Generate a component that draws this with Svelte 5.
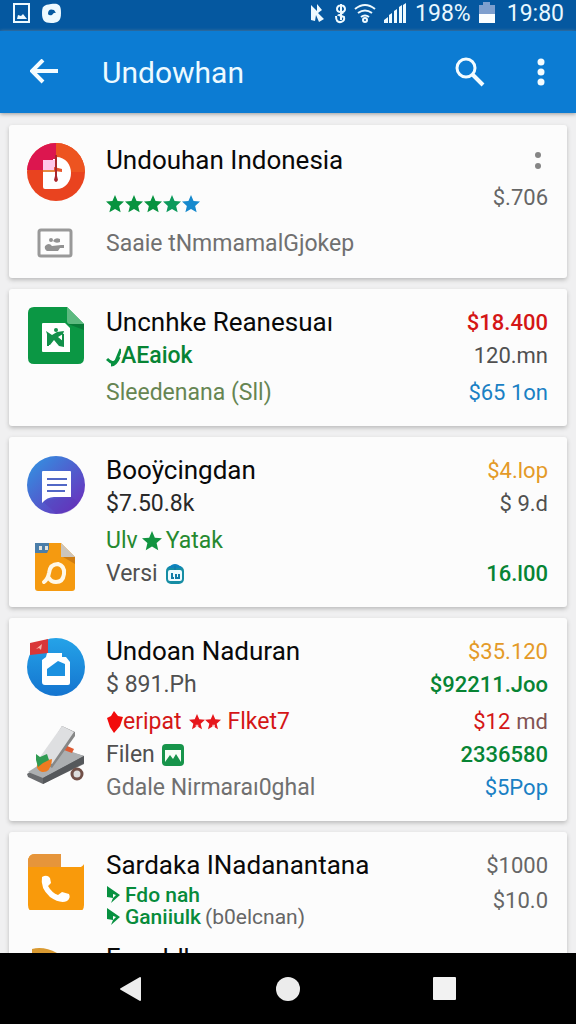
<script>
  const star = 'M12 0l3.400 8 8.600.8-6.500 5.700 2 8.500L12 18.500 4.500 23l2-8.500L0 8.800 8.600 8z'

  const apps = [
    {
      icons: ['disc', 'picture'],
      roomy: true,
      rows: [
        { title: 'Undouhan Indonesia', menu: true },
        { stars: ['#07933f', '#07933f', '#07933f', '#0c9a5c', '#1689cd'], price: '$.706', tone: 'grey' },
        { parts: [{ text: 'Saaie tNmmamalGjokep', tone: 'soft' }] },
      ],
    },
    {
      icons: ['sheet'],
      rows: [
        { title: 'Uncnhke Reanesuaı', price: '$18.400', tone: 'red', strong: true },
        { parts: [{ shape: 'swoosh' }, { text: 'AEaiok', tone: 'green', strong: true }], price: '120.mn', tone: 'dark' },
        { parts: [{ text: 'Sleedenana (Sll)', tone: 'olive' }], price: '$65 1on', tone: 'blue', space: true },
      ],
    },
    {
      icons: ['chat', 'doc'],
      rows: [
        { title: 'Booÿcingdan', price: '$4.lop', tone: 'amber' },
        { parts: [{ text: '$7.50.8k', tone: 'ink' }], price: '$ 9.d', tone: 'dark' },
        { parts: [{ text: 'Ulv', tone: 'leaf' }, { shape: 'star' }, { text: 'Yatak', tone: 'leaf' }], space: true },
        { parts: [{ text: 'Versi', tone: 'dark' }, { shape: 'bag' }], price: '16.l00', tone: 'green', strong: true },
      ],
    },
    {
      icons: ['home', 'stapler'],
      rows: [
        { title: 'Undoan Naduran', price: '$35.120', tone: 'amber' },
        { parts: [{ text: '$ 891.Ph', tone: 'dark' }], price: '$92211.Joo', tone: 'green', strong: true },
        { parts: [{ shape: 'redpin' }, { text: 'eripat', tone: 'red' }, { shape: 'redstars' }, { text: 'Flket7', tone: 'red' }], price: '$12', unit: 'md', tone: 'red', space: true },
        { parts: [{ text: 'Filen', tone: 'dark' }, { shape: 'photo' }], price: '2336580', tone: 'green', strong: true },
        { parts: [{ text: 'Gdale Nirmaraı0ghal', tone: 'soft' }], price: '$5Pop', tone: 'blue' },
      ],
    },
    {
      icons: ['phone', 'folder'],
      rows: [
        { title: 'Sardaka INadanantana', price: '$1000', tone: 'grey' },
        { lines: [{ label: 'Fdo nah' }, { label: 'Ganiiulk', note: '(b0elcnan)' }], price: '$10.0', tone: 'grey' },
        { title: 'Fanaldka', next: true },
      ],
    },
  ]
</script>

{#snippet appIcon(name)}
  {#if name === 'disc'}
    <svg width="58" height="60" viewBox="0 0 58 60">
      <circle cx="29" cy="29" r="29" fill="#e9431f" />
      <path d="M29 0v27H0A29 29 0 0 1 29 0z" fill="#dc164f" />
      <path d="M29 0a29 29 0 0 1 29 29H29z" fill="#ed5420" />
      <path d="M29 14c20 0 20 32 0 32H18q-2 0-2-2V16h13z" fill="#fff" />
      <path d="M16 16h13v-2h-3v3H16z" fill="#dc164f" />
      <path d="M16 17h13v10H16z" fill="#ffc6e9" />
      <path d="M16 27h13v2H16z" fill="#e58a43" />
      <path d="M27 24l8 2v3l-8-1z" fill="#e9562a" />
      <path d="M28 12h2v21l1 4q-2 4-4 0l1-4z" fill="#a9262c" />
    </svg>
  {:else if name === 'picture'}
    <svg width="58" height="56" viewBox="0 0 58 56">
      <rect x="12" y="15" width="32" height="26" rx="2" fill="#fdfdfd" stroke="#999" stroke-width="3" />
      <path d="M18 31q4-4 7 0l9-1h3v3h-4l-2 3H20q-3-2-2-5z" fill="#929292" />
      <circle cx="24" cy="25" r="2" fill="#929292" />
      <path d="M26 26q2-4 7-2v3q-4 2-7-1z" fill="#929292" />
    </svg>
  {:else if name === 'sheet'}
    <svg width="58" height="60" viewBox="0 0 58 60">
      <path d="M7 0h33l17 17v34q0 6-6 6H7q-6 0-6-6V6q0-6 6-6z" fill="#0b9744" />
      <path d="M40 0l17 17H43q-3 0-3-3z" fill="#5dba80" />
      <path d="M41 17h16v6z" fill="#087b38" />
      <path d="M16 16h22l5 5v24H16q-1 0-1-1V17q0-1 1-1z" fill="#fff" />
      <path d="M19 24l6 4 5-3 7-1-1 3-5 3 6 5v5l-5-1-5-6-4 5h-3l1-8z" fill="#12904a" />
      <path d="M21 27v12M36 27v10" stroke="#12904a" stroke-width="2" />
      <circle cx="29" cy="23" r="2" fill="#12904a" />
    </svg>
  {:else if name === 'chat'}
    <svg width="58" height="60" viewBox="0 0 58 60">
      <defs>
        <linearGradient id="violet" x1="0" y1="0" x2="1" y2="1">
          <stop offset=".1" stop-color="#358ddf" />
          <stop offset=".9" stop-color="#6932be" />
        </linearGradient>
      </defs>
      <circle cx="29" cy="30" r="29" fill="url(#violet)" />
      <path d="M44 41l8 7q-10 12-22 11L15 46z" fill="#5a35b2" opacity=".3" />
      <path d="M16 16h27q1 0 1 1v25H27q-7 0-12 6V17q0-1 1-1z" fill="#fff" />
      <path d="M20 24h20M20 30h20M20 36h18" stroke="#5268c6" stroke-width="2" />
    </svg>
  {:else if name === 'doc'}
    <svg width="58" height="80" viewBox="0 0 58 80">
      <path d="M8 16h26l14 14v31q0 3-3 3H11q-3 0-3-3z" fill="#f59a10" />
      <path d="M34 16l14 14H34z" fill="#ccc5bc" />
      <path d="M36 30h12v7z" fill="#cf7d12" />
      <path d="M8 16h14v6l-2 4H8z" fill="#4b7ea9" />
      <path d="M12 19h3v4h-3zM18 19h3v4h-3z" fill="#e4e4df" />
      <path d="M17 55q4-3 5-9 1-9 9-9 7 2 6 10-1 8-8 8-5 0-7-4" fill="none" stroke="#fff8e8" stroke-width="4" stroke-linejoin="round" stroke-linecap="round" />
    </svg>
  {:else if name === 'home'}
    <svg width="58" height="60" viewBox="0 0 58 60">
      <defs>
        <linearGradient id="sky" x1="0" y1="0" x2="0" y2="1">
          <stop offset="0" stop-color="#25a3e8" />
          <stop offset="1" stop-color="#1474cf" />
        </linearGradient>
      </defs>
      <circle cx="29" cy="31" r="29" fill="url(#sky)" />
      <path d="M20 17h15v4h4l4 5v21q0 2-2 2H18q-3 0-3-3V24l4-3z" fill="#fff" />
      <path d="M20 33l11-8 7 3v12H20z" fill="#1b91e0" />
      <path d="M3 7l18-4v14L3 19z" fill="#d93738" />
      <path d="M9 13l6-5-1 6-2-2z" fill="#f6b4aa" />
    </svg>
  {:else if name === 'stapler'}
    <svg width="58" height="100" viewBox="0 0 58 100">
      <path d="M0 66l36-24 21 6v8L16 76 1 69z" fill="#696b6e" />
      <path d="M1 64l36-23 20 7-41 22z" fill="#acafb1" />
      <path d="M16 70l41-22v7L16 76z" fill="#55585b" />
      <path d="M38 37l9 4-2 4-8-3z" fill="#df5b32" />
      <path d="M35 18l13 6v4L25 60l-11-7z" fill="#868787" />
      <path d="M35 18l12 6-22 32-12-7z" fill="#dedfe1" />
      <path d="M10 57q4-8 7-4l8-2q-1 14-10 13-6-2-5-7z" fill="#ed7b20" />
      <path d="M9 46l4 3 7-3 2 6-6 3-5 4-2-7z" fill="#2f9b52" />
      <circle cx="50" cy="66" r="5" fill="#ddd" stroke="#715048" stroke-width="3" />
    </svg>
  {:else if name === 'phone'}
    <svg width="58" height="60" viewBox="0 0 58 60">
      <path d="M8 4h26v13h20q3-2 3-3v41q0 7-7 7H8q-7 0-7-7V12q0-8 7-8z" fill="#f99a0b" />
      <path d="M8 4h26v13H1v-5q0-8 7-8z" fill="#e6953b" />
      <path d="M15 27q5-3 8 1l1 5-3 3q4 7 10 9l4-3 7 2q2 4-2 7-7 3-17-4Q13 38 15 27z" fill="#fff" />
    </svg>
  {:else}
    <svg width="58" height="58" viewBox="0 0 58 58">
      <path d="M5 27q12-3 25 4h20v26H5z" fill="#d99a32" />
    </svg>
  {/if}
{/snippet}

{#snippet shape(name)}
  {#if name === 'swoosh'}
    <svg class="inline tight" width="15" height="22" viewBox="0 0 15 22">
      <path d="M1 14q6 6 9 2l5-12M5 20q5 0 8-8" fill="none" stroke="#079140" stroke-width="3" />
    </svg>
  {:else if name === 'star'}
    <svg class="inline" width="20" height="22" viewBox="0 0 24 24"><path d={star} fill="#129441" /></svg>
  {:else if name === 'bag'}
    <svg class="inline wide" width="20" height="22" viewBox="0 0 20 22">
      <rect x="1" y="3" width="18" height="18" rx="5" fill="#168da4" />
      <path d="M3 5q7-8 14 0z" fill="#0d83be" />
      <rect x="3" y="7" width="14" height="11" rx="2" fill="#f0fbff" />
      <path d="M7 10v5h2M11 11v4h3v-4M10 3v4" fill="none" stroke="#137ca8" stroke-width="2" />
    </svg>
  {:else if name === 'redpin'}
    <svg class="inline tight" width="17" height="22" viewBox="0 0 17 22">
      <path d="M8 0l4 5 5 1-3 9-6 7-4-6-3-9 4-2z" fill="#f20b0b" />
    </svg>
  {:else if name === 'redstars'}
    <svg class="inline wide" width="32" height="18" viewBox="0 0 48 24">
      <path d={star} fill="#e6161b" />
      <path d={star} transform="translate(24)" fill="#e6161b" />
      <path d="M10 16h4v7h-4zM35 16h4v7h-4z" fill="#fff" opacity=".7" />
    </svg>
  {:else}
    <svg class="inline wide" width="22" height="22" viewBox="0 0 22 22">
      <rect width="22" height="22" rx="4" fill="#17944b" />
      <path d="M3 6h16v12H3z" fill="#f7fff8" />
      <path d="M3 18l5-7 3 4 3-5 5 8z" fill="#17944b" />
    </svg>
  {/if}
{/snippet}

<div class="screen">
  <div class="status">
    <svg width="48" height="24" viewBox="0 0 48 24">
      <path d="M2 3h15v18H2z" fill="none" stroke="#eefaff" stroke-width="2" />
      <path d="M5 18l1-4 3 1 2-2 4 5z" fill="#eefaff" />
      <path d="M39 3c8-1 10 1 10 9s-3 10-10 10-9-3-9-10 2-8 9-9z" fill="#eefaff" />
      <path d="M36 13q0-6 6-4l2 3q-2-1-4 2-3 1-4-1z" fill="#0559a0" />
    </svg>
    <div class="signals">
      <svg width="96" height="24" viewBox="0 0 96 24">
        <g fill="none" stroke="#eefaff" stroke-width="2">
          <path d="M30 3v16M26 8q0-3 4-4 4 1 4 4t-4 3q-4 0-4-3M25 15q0 7 5 6 4-1 3-5l-5-2 5-3" />
          <path d="M44 8q10-8 20 0M47 12q7-5 14 0M50 16q4-3 8 0" />
          <circle cx="54" cy="19" r="2" />
        </g>
        <path d="M0 4l6 6V3l5 6-4 3 6 6-5 3-3-7-1 6-4-1z" fill="#eefaff" />
        <path d="M73 22v-3l4-3v6zM78 22v-8l3-2v10zM83 22V10l3-2v14zM88 22V6l3-2v18zM92 22V4l3-2v20z" fill="#eefaff" />
      </svg>
      <span class="charge">198%</span>
      <svg width="16" height="22" viewBox="0 0 16 22">
        <path d="M4 0h7v3h5v18H0V3h4z" fill="#7d9fce" />
        <path d="M0 12h16v9H0z" fill="#fafeff" />
      </svg>
      <span class="clock">19:80</span>
    </div>
  </div>

  <header>
    <button aria-label="Back">
      <svg width="28" height="26" viewBox="0 0 28 26">
        <path d="M28 12H3M13 1L2 12l11 11" fill="none" stroke="#f4fcff" stroke-width="4" />
      </svg>
    </button>
    <h1>Undowhan</h1>
    <button aria-label="Search">
      <svg width="30" height="30" viewBox="0 0 30 30">
        <circle cx="11" cy="11" r="9" fill="none" stroke="#f4fcff" stroke-width="3" />
        <path d="M17 17l11 11" stroke="#f4fcff" stroke-width="4" />
      </svg>
    </button>
    <button aria-label="More options">
      <svg width="8" height="28" viewBox="0 0 8 28" fill="#f4fcff">
        <circle cx="4" cy="4" r="3.500" /><circle cx="4" cy="14" r="3.500" /><circle cx="4" cy="24" r="3.500" />
      </svg>
    </button>
  </header>

  <main>
    {#each apps as app}
      <article class:roomy={app.roomy}>
        <div class="icons">
          {#each app.icons as name}
            {@render appIcon(name)}
          {/each}
        </div>
        <div class="rows">
          {#each app.rows as row}
            <div class="row" class:space={row.space} class:rating={row.stars} class:pair={row.lines} class:next={row.next}>
              {#if row.title}
                <h2>{row.title}</h2>
              {:else if row.stars}
                <div class="stars">
                  {#each row.stars as color}
                    <svg width="18" height="20" viewBox="0 0 24 24"><path d={star} fill={color} /></svg>
                  {/each}
                </div>
              {:else if row.lines}
                <div class="lines">
                  {#each row.lines as line}
                    <div class="line">
                      <svg width="15" height="18" viewBox="0 0 15 18">
                        <path d="M1 0l13 9-9 8 2-5-6-1z" fill="#079140" />
                        <path d="M7 8l3 1-3 3z" fill="#fff" />
                      </svg>
                      <b>{line.label}</b>
                      {#if line.note}<span>{line.note}</span>{/if}
                    </div>
                  {/each}
                </div>
              {:else}
                <p>
                  {#each row.parts as part}
                    {#if part.shape}
                      {@render shape(part.shape)}
                    {:else}
                      <span class={part.tone} class:strong={part.strong}>{part.text}</span>
                    {/if}
                  {/each}
                </p>
              {/if}
              {#if row.menu}
                <button class="dots" aria-label="App options">
                  <svg width="8" height="20" viewBox="0 0 8 20" fill="#858585">
                    <circle cx="4" cy="4" r="3" /><circle cx="4" cy="15" r="3" />
                  </svg>
                </button>
              {:else if row.price}
                <span class="price {row.tone}" class:strong={row.strong}>{row.price}{#if row.unit}<span class="unit">{row.unit}</span>{/if}</span>
              {/if}
            </div>
          {/each}
        </div>
      </article>
    {/each}
  </main>

  <nav>
    <button aria-label="Navigate back">
      <svg width="24" height="26" viewBox="0 0 24 26"><path d="M1 12L20 1q1 0 1 1v22q0 1-1 1L1 14q-2-1 0-2z" fill="#ececec" /></svg>
    </button>
    <button aria-label="Home">
      <svg width="24" height="26" viewBox="0 0 24 26"><circle cx="12" cy="13" r="12" fill="#ececec" /></svg>
    </button>
    <button aria-label="Recent apps">
      <svg width="24" height="26" viewBox="0 0 24 26"><rect x="1" y="1" width="23" height="23" rx="1" fill="#f2f2f2" /></svg>
    </button>
  </nav>
</div>

<style>
  :global(body) {
    background: #000;
  }

  .screen {
    display: flex;
    flex-direction: column;
    height: 100vh;
    font-family: Roboto, "Noto Sans", sans-serif;
    background: #f0f0f1;
  }

  svg {
    display: block;
    flex: none;
  }

  button {
    padding: 0;
    border: 0;
    background: none;
    cursor: pointer;
  }

  .status {
    flex: none;
    display: flex;
    align-items: center;
    justify-content: space-between;
    height: 31px;
    padding: 0 12px 5px 12px;
    box-sizing: border-box;
    background: #0558a0;
    color: #e9f8ff;
    font-size: 23px;
  }

  .status > svg {
    overflow: visible;
  }

  .signals {
    display: flex;
    align-items: center;
    gap: 8px;
  }

  .clock {
    margin-left: 4px;
  }

  header {
    flex: none;
    display: flex;
    align-items: center;
    height: 82px;
    padding: 0 31px 0 30px;
    box-sizing: border-box;
    background: #0c7cd3;
    box-shadow: 0 1px 4px #999;
    position: relative;
  }

  h1 {
    flex: 1;
    margin: 0 0 0 44px;
    color: #edfaff;
    font-size: 30px;
    font-weight: 400;
  }

  header button:last-child {
    margin-left: 52px;
  }

  main {
    flex: 1;
    min-height: 0;
    overflow: hidden;
    display: flex;
    flex-direction: column;
    gap: 11px;
    padding: 12px 9px 0;
  }

  article {
    flex: none;
    display: flex;
    gap: 21px;
    padding: 0 19px 0 18px;
    border-radius: 3px;
    background: #fcfcfc;
    box-shadow: 0 2px 4px #bbb;
  }

  .icons {
    display: flex;
    flex-direction: column;
    gap: 12px;
    padding-top: 18px;
  }

  .rows {
    flex: 1;
    min-width: 0;
    padding: 17px 0;
  }

  .roomy .rows {
    padding: 19px 0 18px;
  }

  .row {
    display: flex;
    justify-content: space-between;
    align-items: flex-start;
    font-size: 22px;
    line-height: 33px;
    white-space: nowrap;
  }

  .space {
    margin-top: 4px;
  }

  .rating {
    height: 46px;
    padding-top: 4px;
  }

  .pair {
    padding-top: 2px;
  }

  .next {
    margin-top: 14px;
  }

  h2 {
    margin: 0;
    color: #090909;
    font-size: 26px;
    font-weight: 400;
  }

  p {
    display: flex;
    align-items: center;
    margin: 0;
    font-size: 23px;
  }

  .inline {
    margin: 0 4px;
  }

  .inline.tight {
    margin: 0;
  }

  .inline.wide {
    margin: 0 7px;
  }

  .stars {
    display: flex;
    align-self: center;
    gap: 1px;
  }

  .line {
    display: flex;
    align-items: center;
    gap: 4px;
    color: #666;
    font-size: 21px;
    line-height: 22px;
  }

  .line b {
    color: #078b3b;
    font-weight: 500;
  }

  .dots {
    height: 33px;
    margin-right: 6px;
  }

  .strong { font-weight: 500; }
  .ink { color: #292929; }
  .dark { color: #505050; }
  .grey { color: #666; }
  .soft { color: #707070; }
  .green { color: #078434; }
  .leaf { color: #26892f; }
  .olive { color: #668552; }
  .red { color: #d41616; }
  .blue { color: #1980c4; }
  .amber { color: #e49a28; }

  .unit {
    margin-left: 6px;
    color: #805454;
  }

  nav {
    flex: none;
    display: flex;
    align-items: center;
    justify-content: center;
    gap: 23%;
    height: 71px;
    background: #000;
  }
</style>
